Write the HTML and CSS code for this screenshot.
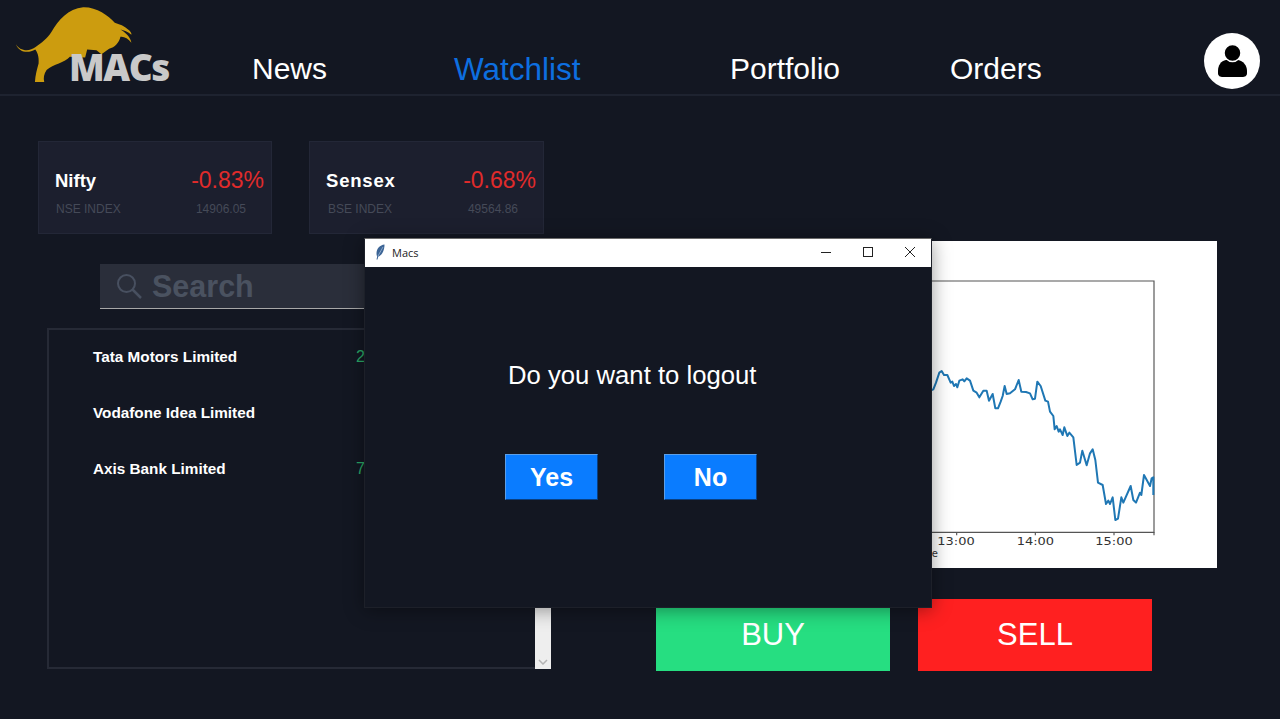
FILE: index.html
```html
<!DOCTYPE html>
<html lang="en">
<head>
    <meta charset="UTF-8">
    <meta name="viewport" content="width=device-width, initial-scale=1.0">
    <title>MACs Watchlist</title>
    <link rel="stylesheet" href="styles.css">
</head>
<body>

<!-- Top bar -->
<header class="topbar">
    <div class="logo">
        <svg class="logo-bull" viewBox="0 0 520 260" width="173" height="87">
            <path fill="#cc9c0f" d="M48 132 C58 150 85 158 108 140 C125 128 140 118 155 95 C175 60 205 25 250 21 C290 20 325 45 345 68 C358 72 375 78 385 88 C392 92 396 100 395 104 C385 95 372 90 362 88 C375 95 392 110 395 128 C385 115 372 108 362 110 C358 128 345 142 328 146 L305 162 L290 150 L262 148 L256 172 L210 170 C195 188 160 192 140 210 C132 222 130 235 133 246 L105 246 C106 225 112 205 116 190 C118 170 112 155 106 148 C85 160 58 158 48 132 Z"/>
        </svg>
        <span class="logo-text">MACs</span>
    </div>
    <nav class="nav">
        <a class="nav-link">News</a>
        <a class="nav-link nav-active">Watchlist</a>
        <a class="nav-link">Portfolio</a>
        <a class="nav-link">Orders</a>
    </nav>
    <div class="avatar">
        <svg viewBox="0 0 56 56" width="56" height="56">
            <path fill="#000" d="M14 38 C14 32 17 28 22 27 L34 27 C39 28 43 32 43 38 L43 40 C43 43 41 44 38 44 L19 44 C16 44 14 43 14 40 Z"/>
            <circle cx="28.500" cy="20" r="8.500" fill="#000" stroke="#fff" stroke-width="1.500"/>
        </svg>
    </div>
</header>

<main class="content">
    <!-- Indexes, search and stock list -->
    <section class="left-col">
        <div class="index-cards">
            <div class="index-card">
                <div class="index-row">
                    <span class="index-name">Nifty</span>
                    <span class="index-change">-0.83%</span>
                </div>
                <div class="index-row index-sub">
                    <span>NSE INDEX</span>
                    <span>14906.05</span>
                </div>
            </div>
            <div class="index-card index-card-wide">
                <div class="index-row">
                    <span class="index-name index-wide">Sensex</span>
                    <span class="index-change">-0.68%</span>
                </div>
                <div class="index-row index-sub">
                    <span>BSE INDEX</span>
                    <span>49564.86</span>
                </div>
            </div>
        </div>

        <div class="search">
            <svg viewBox="0 0 26 26" width="26" height="26">
                <circle cx="10.500" cy="10.500" r="8.500" fill="none" stroke="#485060" stroke-width="2"/>
                <path d="M16.500 16.500 L25 25" stroke="#485060" stroke-width="2.500"/>
            </svg>
            <span class="search-text">Search</span>
        </div>

        <div class="stock-list">
            <div class="stock-rows">
                <div class="stock-row"><span class="stock-name">Tata Motors Limited</span><span class="stock-price">2</span></div>
                <div class="stock-row"><span class="stock-name">Vodafone Idea Limited</span><span class="stock-price"></span></div>
                <div class="stock-row"><span class="stock-name">Axis Bank Limited</span><span class="stock-price">7</span></div>
            </div>
            <div class="scrollbar">
                <svg viewBox="0 0 10 6" width="10" height="6"><path d="M1 1 L5 5 L9 1" fill="none" stroke="#b4b4b4" stroke-width="1.500"/></svg>
            </div>
        </div>
    </section>

    <!-- Chart and trade buttons -->
    <section class="right-col">
        <div class="chart">
            <!-- coordinates are 3x page pixels -->
            <svg viewBox="-840 -357 1731 981" width="577" height="327">
                <path d="M-700 -237 H702 V517 H-700 Z" fill="none" stroke="#555" stroke-width="3.500"/>
                <path d="M110 517 V526 M346 517 V526 M582 517 V526 M702 517 V526" stroke="#555" stroke-width="3.500"/>
                <polyline fill="none" stroke="#1f77b4" stroke-width="6" stroke-linejoin="round" points="35,90 40,88 48,68 58,38 65,33 72,45 82,45 92,68 97,65 102,78 108,72 112,82 118,62 128,58 133,64 140,55 150,62 160,92 170,98 178,112 190,92 200,92 207,122 218,102 226,145 234,145 242,125 248,108 254,78 260,102 270,100 285,88 296,60 304,95 318,96 330,100 338,118 345,116 352,65 362,78 376,122 384,125 390,155 400,168 404,208 410,198 416,215 420,208 428,225 433,202 442,228 448,218 460,232 470,315 480,308 487,272 500,316 510,280 518,268 526,300 534,368 548,375 558,432 565,422 570,432 578,412 586,480 594,476 604,412 610,428 632,378 640,420 648,428 660,398 664,405 672,345 690,378 695,355 700,352 700,405"/>
                <g class="chart-label">
                    <text x="52" y="555" textLength="112" lengthAdjust="spacingAndGlyphs">13:00</text>
                    <text x="290" y="555" textLength="112" lengthAdjust="spacingAndGlyphs">14:00</text>
                    <text x="526" y="555" textLength="112" lengthAdjust="spacingAndGlyphs">15:00</text>
                    <text x="54" y="592" text-anchor="end">Time</text>
                </g>
            </svg>
        </div>
        <div class="trade-buttons">
            <button class="trade-btn buy-btn">BUY</button>
            <button class="trade-btn sell-btn">SELL</button>
        </div>
    </section>
</main>

<!-- Logout dialog window -->
<div class="dialog">
    <div class="dialog-title">
        <svg class="feather" viewBox="0 0 10 16" width="10" height="16">
            <path fill="#3d6596" d="M9.500 0.500 C5 1 1.500 4.500 1.500 9.500 C1.500 11 1.800 12 2.200 12.500 L1.500 15.500 L2.500 15.500 L3.300 12.500 C7 11.500 9.500 6.500 9.500 0.500 Z"/>
            <path d="M8 3 L3 12" stroke="#a9c2de" stroke-width="0.700"/>
        </svg>
        <span class="dialog-name">Macs</span>
        <div class="window-controls">
            <svg viewBox="0 0 10 10" width="10" height="10"><path d="M0 5.500 H10" stroke="#222" stroke-width="1"/></svg>
            <svg viewBox="0 0 10 10" width="10" height="10"><rect x="0.500" y="0.500" width="9" height="9" fill="none" stroke="#222" stroke-width="1"/></svg>
            <svg viewBox="0 0 10 10" width="10" height="10"><path d="M0 0 L10 10 M10 0 L0 10" stroke="#222" stroke-width="1"/></svg>
        </div>
    </div>
    <div class="dialog-body">
        <p class="dialog-msg">Do you want to logout</p>
        <div class="dialog-buttons">
            <button class="dialog-btn">Yes</button>
            <button class="dialog-btn">No</button>
        </div>
    </div>
</div>

</body>
</html>
```

FILE: styles.css
```css
:root {
    --bg-color: #131722;
    --card-bg: #1c1f2e;
    --line-color: #1e2330;
    --muted: #454a58;
}

* {
    box-sizing: border-box;
}

html, body {
    height: 100%;
}

body {
    margin: 0;
    overflow: hidden;
    font-family: "Liberation Sans", Arial, sans-serif;
    background-color: var(--bg-color);
    color: #ffffff;
}

/* Top bar */
.topbar {
    position: relative;
    display: flex;
    align-items: flex-start;
    height: 96px;
    border-bottom: 2px solid var(--line-color);
}

.logo {
    position: relative;
    width: 252px;
    height: 87px;
    flex-shrink: 0;
}

.logo-bull {
    display: block;
}

.logo-text {
    position: absolute;
    left: 69px;
    top: 41px;
    font-family: "Open Sans", sans-serif;
    font-size: 37px;
    font-weight: 800;
    letter-spacing: -1.500px;
    color: #c9c9c9;
}

.nav {
    display: grid;
    grid-template-columns: 202px 276px 220px 254px;
    padding-top: 52px;
    font-size: 30px;
    line-height: 34px;
}

.nav-active {
    color: #0d6fe0;
    font-size: 31.500px;
}

.avatar {
    width: 56px;
    height: 56px;
    margin: 33px 20px 0 auto;
    background-color: #ffffff;
    border-radius: 50%;
}

/* Main layout */
.content {
    display: grid;
    grid-template-columns: 513px 577px;
    column-gap: 89px;
    padding: 45px 0 0 38px;
}

/* Index cards */
.index-cards {
    display: flex;
    gap: 37px;
}

.index-card {
    width: 234px;
    height: 93px;
    padding: 25px 7px 0 16px;
    background-color: var(--card-bg);
    border: 1px solid #232737;
}

.index-card-wide {
    width: 235px;
}

.index-row {
    display: flex;
    justify-content: space-between;
    align-items: center;
}

.index-name {
    font-size: 18.500px;
    font-weight: 700;
}

.index-wide {
    letter-spacing: 0.800px;
}

.index-change {
    font-size: 23px;
    color: #e02b2b;
}

.index-sub {
    margin-top: 8px;
    padding: 0 18px 0 1px;
    font-size: 12px;
    color: var(--muted);
}

.index-card-wide .index-sub {
    padding-left: 2px;
}

/* Search */
.search {
    display: flex;
    align-items: center;
    gap: 10px;
    width: 440px;
    height: 45px;
    margin: 30px 0 0 62px;
    padding-left: 16px;
    background-color: #2a2e3a;
    border-bottom: 1px solid #a8a8a8;
}

.search-text {
    font-size: 30.500px;
    font-weight: 700;
    color: #4a5260;
}

/* Stock list */
.stock-list {
    display: flex;
    width: 504px;
    height: 341px;
    margin: 19px 0 0 9px;
}

.stock-rows {
    flex: 1;
    display: flex;
    flex-direction: column;
    gap: 4px;
    padding: 1px 0 0 44px;
    border: 2px solid #262a36;
    border-right: none;
}

.stock-row {
    display: grid;
    grid-template-columns: 263px auto;
    align-items: center;
    height: 52px;
}

.stock-name {
    font-size: 15.300px;
    font-weight: 700;
}

.stock-price {
    font-size: 16px;
    color: #2aa868;
}

.scrollbar {
    display: flex;
    align-items: flex-end;
    justify-content: center;
    width: 16px;
    padding-bottom: 4px;
    background-color: #eeeeee;
}

/* Chart */
.right-col {
    padding-top: 100px;
}

.chart {
    height: 327px;
    background-color: #ffffff;
}

.chart svg {
    display: block;
}

.chart-label {
    font-family: "DejaVu Sans", sans-serif;
    font-size: 30px;
    fill: #333333;
}

.trade-buttons {
    display: flex;
    gap: 28px;
    margin: 31px 0 0 16px;
}

.trade-btn {
    width: 234px;
    height: 72px;
    border: none;
    color: #ffffff;
    font-family: "Liberation Sans", Arial, sans-serif;
    font-size: 31px;
}

.buy-btn {
    background-color: #26de81;
}

.sell-btn {
    background-color: #ff2020;
}

/* Dialog window */
.dialog {
    position: absolute;
    left: 364px;
    top: 238px;
    width: 568px;
    height: 370px;
    background-color: var(--bg-color);
    border: 1px solid #1d2029;
    border-top-color: #6a6a6a;
    box-shadow: 0 2px 18px rgba(0, 0, 0, 0.4);
}

.dialog-title {
    display: flex;
    align-items: center;
    height: 28px;
    padding: 0 0 2px 10px;
    background-color: #ffffff;
    color: #222222;
}

.dialog-name {
    margin-left: 7px;
    font-family: "Open Sans", sans-serif;
    font-size: 11px;
}

.window-controls {
    display: flex;
    gap: 32px;
    margin-left: auto;
    margin-right: 16px;
}

.dialog-body {
    padding: 91px 0 0 143px;
}

.dialog-msg {
    margin: 0;
    font-size: 25.700px;
    line-height: 34px;
}

.dialog-buttons {
    display: flex;
    gap: 66px;
    margin: 62px 0 0 -3px;
}

.dialog-btn {
    width: 93px;
    height: 46px;
    padding: 0;
    background-color: #0a7cff;
    border: 1px solid;
    border-color: #5c9fe8 #0a3f80 #0a3f80 #5c9fe8;
    color: #ffffff;
    font-family: "Liberation Sans", Arial, sans-serif;
    font-size: 25px;
    font-weight: 700;
}
```
